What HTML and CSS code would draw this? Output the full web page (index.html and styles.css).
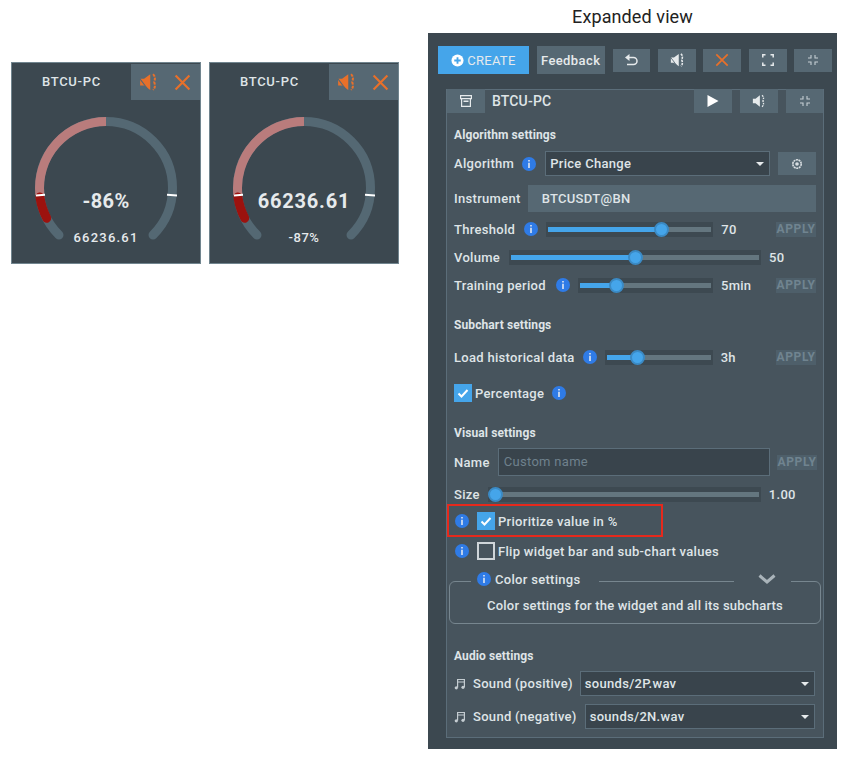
FILE: index.html
```html
<!DOCTYPE html>
<html lang="en">
<head>
    <meta charset="UTF-8">
    <title>Expanded view</title>
    <link rel="stylesheet" href="styles.css">
</head>
<body>
    <svg class="icon-defs" width="0" height="0">
        <symbol id="i-mute" viewBox="0 0 16 16">
            <path fill="currentColor" d="M1 5h3.500L10 1v14l-5.500-4H1z"/>
            <path fill="none" stroke="var(--button)" stroke-width="1" d="M0 4l9 12"/>
            <path fill="none" stroke="currentColor" stroke-width="1.800" stroke-dasharray="2.600 1" d="M12.500 1c2 2 2 4 1 7 1 3 1 5-1 7"/>
        </symbol>
        <symbol id="i-sound" viewBox="0 0 16 16">
            <path fill="currentColor" d="M1 5.500h3L9 1.500v13l-5-4H1z"/>
            <path fill="none" stroke="currentColor" stroke-width="1.500" stroke-dasharray="2 1" d="M11.500 1.500c2 2 2 3 1 6.500 1 3 1 4.500-1 6.500"/>
        </symbol>
        <symbol id="i-close" viewBox="0 0 16 16">
            <path fill="none" stroke="currentColor" stroke-width="2" d="M1.500 1.500l13 13M14.500 1.500l-13 13"/>
        </symbol>
        <symbol id="i-back" viewBox="0 0 14 14">
            <path fill="none" stroke="currentColor" stroke-width="1.500" d="M3 4.500h6.500a3.500 3.500 0 0 1 0 7H3"/>
            <path fill="currentColor" d="M5.500 1v7L1 4.500z"/>
        </symbol>
        <symbol id="i-expand" viewBox="0 0 12 12">
            <path fill="none" stroke="currentColor" stroke-width="1.500" d="M.8 3.500V.8h2.700M8.500.8h2.700v2.700M11.200 8.500v2.700H8.500M3.500 11.200H.8V8.500"/>
        </symbol>
        <symbol id="i-shrink" viewBox="0 0 12 12">
            <path fill="none" stroke="currentColor" stroke-width="1.100" d="M4 1v3H1M8 1v3h3M4 11V8H1M8 11V8h3"/>
        </symbol>
        <symbol id="i-archive" viewBox="0 0 12 12">
            <path fill="none" stroke="currentColor" stroke-width="1.200" d="M.6.6h10.800v3H.6zM1.600 3.600v7.800h8.800V3.600"/>
            <path fill="currentColor" d="M3.500 5.500h5v1.500h-5z"/>
        </symbol>
        <symbol id="i-info" viewBox="0 0 14 14">
            <circle cx="7" cy="7" r="7" fill="#2f7be6"/>
            <path fill="#dfe7f2" d="M6.200 3h1.600v1.500H6.200zM6.200 5.800h1.600V11H6.200z"/>
        </symbol>
        <symbol id="i-note" viewBox="0 0 12 12">
            <path fill="none" stroke="currentColor" stroke-width="1.200" d="M3.600 9.500V1.500h6.800v7.500M3.600 4h6.800"/>
            <circle cx="2.300" cy="9.800" r="1.600" fill="currentColor"/>
            <circle cx="9" cy="9.300" r="1.600" fill="currentColor"/>
        </symbol>
        <symbol id="i-check" viewBox="0 0 18 18">
            <path fill="none" stroke="#fff" stroke-width="2" d="M4.500 9.500l3 3 6-6.500"/>
        </symbol>
        <symbol id="i-gauge" viewBox="0 0 190 164">
            <path class="arc-base" d="M47.980 135.020A66.500 66.500 0 1 1 142.020 135.020"/>
            <path class="arc-light" d="M28.870 95A66.500 66.500 0 0 1 95 21.500"/>
            <path class="arc-dark" d="M28.900 97A66.500 66.500 0 0 0 35.750 118.200"/>
            <path class="arc-tick" d="M25 95.500l9-.8M156 94.700l10 .8"/>
        </symbol>
    </svg>

    <div class="widgets">
        <div class="widget">
            <div class="widget-head">
                <span class="widget-name">BTCU-PC</span>
                <div class="widget-actions">
                    <svg class="ico-orange ico-mute"><use href="#i-mute"/></svg>
                    <svg class="ico-orange ico-x"><use href="#i-close"/></svg>
                </div>
            </div>
            <svg class="gauge" width="190" height="164"><use href="#i-gauge"/></svg>
            <div class="gauge-text">
                <span class="big">-86%</span>
                <span class="small wide">66236.61</span>
            </div>
        </div>
        <div class="widget">
            <div class="widget-head">
                <span class="widget-name">BTCU-PC</span>
                <div class="widget-actions">
                    <svg class="ico-orange ico-mute"><use href="#i-mute"/></svg>
                    <svg class="ico-orange ico-x"><use href="#i-close"/></svg>
                </div>
            </div>
            <svg class="gauge" width="190" height="164"><use href="#i-gauge"/></svg>
            <div class="gauge-text">
                <span class="big wide">66236.61</span>
                <span class="small">-87%</span>
            </div>
        </div>
    </div>

    <div class="expanded">
        <h1 class="expanded-title">Expanded view</h1>
        <div class="panel">
            <div class="toolbar">
                <button class="btn-create"><svg class="plus" viewBox="0 0 14 14"><circle cx="7" cy="7" r="6.500" fill="#fff"/><path d="M7 3.500v7M3.500 7h7" stroke="#45a5ea" stroke-width="2"/></svg>CREATE</button>
                <button class="btn-feedback">Feedback</button>
                <button class="btn-tool"><svg class="ico-14"><use href="#i-back"/></svg></button>
                <button class="btn-tool"><svg class="ico-14"><use href="#i-mute"/></svg></button>
                <button class="btn-tool ico-orange"><svg class="ico-14"><use href="#i-close"/></svg></button>
                <button class="btn-tool"><svg class="ico-12"><use href="#i-expand"/></svg></button>
                <button class="btn-tool"><svg class="ico-shrink"><use href="#i-shrink"/></svg></button>
            </div>

            <div class="inner">
                <div class="inner-head">
                    <button class="btn-head first"><svg class="ico-12"><use href="#i-archive"/></svg></button>
                    <span class="inner-name">BTCU-PC</span>
                    <button class="btn-head"><svg class="ico-play" viewBox="0 0 12 12"><path fill="#fff" d="M.5 0l11 6-11 6z"/></svg></button>
                    <button class="btn-head"><svg class="ico-14"><use href="#i-sound"/></svg></button>
                    <button class="btn-head last"><svg class="ico-shrink"><use href="#i-shrink"/></svg></button>
                </div>

                <div class="inner-body">
                    <h2 class="section">Algorithm settings</h2>
                    <div class="row row-algo">
                        <span class="label">Algorithm</span>
                        <svg class="info info-algo"><use href="#i-info"/></svg>
                        <div class="select select-algo">Price Change<i class="caret"></i></div>
                        <button class="btn-gear"><svg class="ico-12" viewBox="0 0 12 12"><circle cx="6" cy="6" r="4.200" fill="none" stroke="#d8dee2" stroke-width="1.600" stroke-dasharray="2 .6"/><circle cx="6" cy="6" r="1.800" fill="#d8dee2"/></svg></button>
                    </div>
                    <div class="row row-instrument">
                        <span class="label">Instrument</span>
                        <div class="instrument">BTCUSDT@BN</div>
                    </div>
                    <div class="row row-threshold">
                        <span class="label">Threshold</span>
                        <svg class="info info-threshold"><use href="#i-info"/></svg>
                        <div class="slider slider-threshold"><div class="track"><div class="fill" style="width: 69%"><i class="knob"></i></div></div></div>
                        <span class="value">70</span>
                        <span class="apply">APPLY</span>
                    </div>
                    <div class="row row-volume">
                        <span class="label">Volume</span>
                        <div class="slider slider-volume"><div class="track"><div class="fill" style="width: 50%"><i class="knob"></i></div></div></div>
                        <span class="value">50</span>
                    </div>
                    <div class="row row-training">
                        <span class="label">Training period</span>
                        <svg class="info info-training"><use href="#i-info"/></svg>
                        <div class="slider slider-training"><div class="track"><div class="fill" style="width: 27.500%"><i class="knob"></i></div></div></div>
                        <span class="value">5min</span>
                        <span class="apply">APPLY</span>
                    </div>

                    <h2 class="section section-sub">Subchart settings</h2>
                    <div class="row row-load">
                        <span class="label">Load historical data</span>
                        <svg class="info info-load"><use href="#i-info"/></svg>
                        <div class="slider slider-load"><div class="track"><div class="fill" style="width: 29%"><i class="knob"></i></div></div></div>
                        <span class="value">3h</span>
                        <span class="apply">APPLY</span>
                    </div>
                    <div class="row row-percent">
                        <span class="checkbox checked"><svg><use href="#i-check"/></svg></span>
                        <span class="label label-check">Percentage</span>
                        <svg class="info info-percent"><use href="#i-info"/></svg>
                    </div>

                    <h2 class="section section-visual">Visual settings</h2>
                    <div class="row row-name">
                        <span class="label">Name</span>
                        <div class="name-input">Custom name</div>
                        <span class="apply">APPLY</span>
                    </div>
                    <div class="row row-size">
                        <span class="label">Size</span>
                        <div class="slider slider-size"><div class="track"><div class="fill" style="width: 2%"><i class="knob"></i></div></div></div>
                        <span class="value">1.00</span>
                    </div>
                    <div class="row row-prioritize">
                        <svg class="info"><use href="#i-info"/></svg>
                        <span class="checkbox checked"><svg><use href="#i-check"/></svg></span>
                        <span class="label label-check">Prioritize value in %</span>
                    </div>
                    <div class="row row-flip">
                        <svg class="info"><use href="#i-info"/></svg>
                        <span class="checkbox"></span>
                        <span class="label label-check">Flip widget bar and sub-chart values</span>
                    </div>

                    <div class="color-box">
                        <div class="color-legend">
                            <svg class="info"><use href="#i-info"/></svg>
                            <span class="label">Color settings</span>
                        </div>
                        <div class="color-chevron">
                            <svg viewBox="0 0 18 10" width="18" height="10"><path fill="none" stroke="#aab4ba" stroke-width="3" d="M1.500 1.500L9 8l7.500-6.500"/></svg>
                        </div>
                        <p class="color-note">Color settings for the widget and all its subcharts</p>
                    </div>

                    <h2 class="section section-audio">Audio settings</h2>
                    <div class="row row-sound">
                        <svg class="ico-12 note"><use href="#i-note"/></svg>
                        <span class="label">Sound (positive)</span>
                        <div class="select select-positive">sounds/2P.wav<i class="caret"></i></div>
                    </div>
                    <div class="row row-sound row-sound-neg">
                        <svg class="ico-12 note"><use href="#i-note"/></svg>
                        <span class="label">Sound (negative)</span>
                        <div class="select select-negative">sounds/2N.wav<i class="caret"></i></div>
                    </div>
                </div>
            </div>
        </div>
    </div>
</body>
</html>
```

FILE: styles.css
```css
:root {
    --outer: #3c4850;
    --inner: #47545d;
    --line: #5b6d79;
    --button: #566873;
    --field: #39444c;
    --blue: #45a5ea;
    --text: #dfe4e7;
    --orange: #e8702a;
}

body {
    margin: 0;
    width: 852px;
    height: 764px;
    overflow: hidden;
    display: flex;
    background-color: #ffffff;
    font-family: 'Roboto', sans-serif;
    color: var(--text);
}

button {
    border: none;
    padding: 0;
    display: flex;
    align-items: center;
    justify-content: center;
    font-family: 'Roboto', sans-serif;
    color: #e6eaec;
}

.icon-defs {
    position: absolute;
}

/* small widgets */
.widgets {
    display: flex;
    align-items: flex-start;
    gap: 8px;
    padding: 62px 0 0 11px;
}

.widget {
    position: relative;
    width: 190px;
    height: 202px;
    box-sizing: border-box;
    background-color: var(--outer);
    border: 1px solid #71858f;
}

.widget-head {
    display: flex;
    justify-content: space-between;
    height: 36px;
    margin-top: 1px;
}

.widget-name {
    padding: 10px 0 0 30px;
    font-size: 13px;
    font-weight: 500;
    letter-spacing: 0.7px;
}

.widget-actions {
    width: 69px;
    display: flex;
    align-items: center;
    background-color: var(--button);
}

.ico-orange {
    color: var(--orange);
}

.ico-mute {
    width: 18px;
    height: 18px;
    margin-left: 8px;
}

.ico-x {
    width: 17px;
    height: 17px;
    margin-left: 17px;
}

.gauge {
    display: block;
    margin-left: -1px;
}

.arc-base,
.arc-light,
.arc-dark,
.arc-tick {
    fill: none;
}

.arc-base {
    stroke: #546873;
    stroke-width: 9;
    stroke-linecap: round;
}

.arc-light {
    stroke: #b97c7c;
    stroke-width: 9;
}

.arc-dark {
    stroke: #9c120e;
    stroke-width: 9;
    stroke-linecap: round;
}

.arc-tick {
    stroke: #ffffff;
    stroke-width: 2;
}

.gauge-text {
    position: absolute;
    left: 0;
    right: 0;
    top: 125px;
    display: flex;
    flex-direction: column;
    align-items: center;
    color: #e6eaec;
}

.big {
    height: 26px;
    line-height: 26px;
    font-size: 20px;
    font-weight: 700;
    letter-spacing: 0.4px;
}

.big.wide {
    letter-spacing: 0.8px;
}

.small {
    margin-top: 16px;
    line-height: 16px;
    font-size: 13px;
    font-weight: 500;
    letter-spacing: 0.5px;
}

.small.wide {
    letter-spacing: 1.2px;
}

/* expanded panel */
.expanded {
    margin-left: 29px;
    width: 409px;
}

.expanded-title {
    margin: 0;
    height: 33px;
    line-height: 34px;
    text-align: center;
    font-size: 18px;
    font-weight: 400;
    letter-spacing: 0.1px;
    color: #222222;
}

.panel {
    height: 716px;
    box-sizing: border-box;
    padding: 13px 5px 0 10px;
    background-color: var(--outer);
}

.toolbar {
    display: flex;
    align-items: center;
    height: 28px;
}

.btn-create {
    width: 91px;
    height: 28px;
    background-color: var(--blue);
    font-size: 13px;
    font-weight: 400;
    letter-spacing: 0.3px;
}

.plus {
    width: 13px;
    height: 13px;
    margin-right: 3px;
}

.btn-feedback {
    width: 68px;
    height: 28px;
    margin-left: 8px;
    background-color: var(--button);
    font-size: 13px;
    font-weight: 500;
    letter-spacing: 0.4px;
}

.btn-tool {
    width: 38px;
    height: 23px;
    margin-left: 8px;
    background-color: var(--button);
}

.btn-tool + .btn-tool {
    margin-left: 7.500px;
}

.ico-14 {
    width: 14px;
    height: 14px;
}

.ico-12 {
    width: 12px;
    height: 12px;
}

.ico-shrink {
    width: 12px;
    height: 12px;
    color: #c5ced3;
}

.ico-play {
    width: 12px;
    height: 12px;
}

.inner {
    width: 378px;
    height: 649px;
    box-sizing: border-box;
    margin: 15px 0 0 8px;
    background-color: var(--inner);
    border: 1px solid var(--line);
}

.inner-head {
    display: flex;
    align-items: center;
    height: 24px;
    margin-top: -1px;
}

.btn-head {
    width: 38px;
    height: 24px;
    margin-left: 8px;
    background-color: var(--button);
}

.btn-head.first {
    margin-left: 0;
}

.btn-head.last {
    width: 37px;
}

.inner-name {
    width: 202px;
    padding-left: 7px;
    box-sizing: border-box;
    font-size: 14px;
    font-weight: 500;
    letter-spacing: 0.2px;
}

.inner-body {
    padding: 14px 0 0 7px;
}

.section {
    margin: 0;
    height: 16px;
    line-height: 16px;
    font-size: 12px;
    font-weight: 700;
    letter-spacing: 0.1px;
}

.section-sub {
    margin-top: 24px;
}

.section-visual {
    margin-top: 23px;
}

.section-audio {
    margin-top: 24px;
}

.row {
    display: flex;
    align-items: center;
}

.label {
    font-size: 13px;
    font-weight: 500;
    letter-spacing: 0.3px;
    white-space: nowrap;
}

.info {
    flex: none;
    width: 14px;
    height: 14px;
}

.row-algo {
    height: 25px;
    margin-top: 8px;
}

.info-algo {
    margin-left: 8px;
}

.select {
    position: relative;
    height: 25px;
    line-height: 23px;
    box-sizing: border-box;
    background-color: var(--field);
    border: 1px solid var(--line);
    padding-left: 4px;
    font-size: 13px;
    font-weight: 500;
    letter-spacing: 0.3px;
}

.caret {
    position: absolute;
    right: 5px;
    top: 10px;
    border-left: 4px solid transparent;
    border-right: 4px solid transparent;
    border-top: 4px solid #e6eaec;
}

.select-algo {
    width: 225px;
    margin-left: 9px;
}

.btn-gear {
    width: 38px;
    height: 23px;
    margin-left: 8px;
    background-color: var(--button);
}

.row-instrument {
    height: 27px;
    margin-top: 9px;
}

.instrument {
    width: 288px;
    height: 27px;
    line-height: 27px;
    box-sizing: border-box;
    margin-left: 7px;
    padding-left: 14px;
    background-color: var(--button);
    font-size: 13px;
    font-weight: 500;
    letter-spacing: 0.3px;
}

.slider {
    height: 15px;
    display: flex;
    align-items: center;
    padding: 0 2px;
    box-sizing: border-box;
    background-color: #3d4951;
}

.track {
    flex: 1;
    height: 5px;
    background-color: #64767f;
}

.fill {
    position: relative;
    height: 5px;
    background-color: var(--blue);
}

.knob {
    position: absolute;
    right: -8px;
    top: -5px;
    width: 11px;
    height: 11px;
    border-radius: 50%;
    background-color: var(--blue);
    border: 2px solid #3b8ac4;
}

.value {
    margin-left: 8px;
    font-size: 13px;
    font-weight: 500;
    letter-spacing: 0.3px;
    color: var(--text);
}

.apply {
    margin-left: auto;
    width: 40px;
    height: 15px;
    line-height: 15px;
    text-align: center;
    background-color: #4e5f6a;
    color: #708490;
    font-size: 12px;
    font-weight: 700;
    letter-spacing: 0.6px;
}

.row-threshold {
    width: 362px;
    height: 16px;
    margin-top: 9px;
}

.info-threshold {
    margin-left: 9px;
}

.slider-threshold {
    width: 167px;
    margin-left: 8px;
}

.row-volume {
    height: 16px;
    margin-top: 12px;
}

.slider-volume {
    width: 252px;
    margin-left: 9px;
}

.row-training {
    width: 362px;
    height: 16px;
    margin-top: 12px;
}

.info-training {
    margin-left: 10px;
}

.slider-training {
    width: 135px;
    margin-left: 8px;
}

.row-load {
    width: 362px;
    height: 16px;
    margin-top: 16px;
}

.info-load {
    margin-left: 8px;
}

.slider-load {
    width: 108px;
    margin-left: 8px;
}

.row-percent {
    height: 18px;
    margin-top: 19px;
}

.checkbox {
    flex: none;
    display: block;
    width: 18px;
    height: 18px;
    box-sizing: border-box;
    border: 2px solid #cfd5d9;
}

.checkbox svg {
    display: block;
    width: 18px;
    height: 18px;
}

.checkbox.checked {
    border: none;
    background-color: var(--blue);
}

.label-check {
    margin-left: 3px;
}

.info-percent {
    margin-left: 8px;
}

.row-name {
    width: 363px;
    height: 28px;
    margin-top: 7px;
}

.name-input {
    width: 272px;
    height: 28px;
    line-height: 26px;
    box-sizing: border-box;
    margin-left: 8px;
    padding-left: 5px;
    background-color: var(--field);
    border: 1px solid var(--line);
    color: #6f818c;
    font-size: 13px;
    letter-spacing: 0.3px;
}

.row-size {
    height: 16px;
    margin-top: 10px;
}

.slider-size {
    width: 273px;
    margin-left: 8px;
}

.row-prioritize {
    width: 216px;
    height: 33px;
    box-sizing: border-box;
    margin: 2px 0 0 -7px;
    padding: 1px 0 0 6px;
    border: 2px solid #e6291c;
}

.row-prioritize .checkbox {
    margin-left: 8px;
}

.row-flip {
    height: 18px;
    margin-top: 5px;
    margin-left: 1px;
}

.row-flip .checkbox {
    margin-left: 8px;
}

.color-box {
    position: relative;
    width: 372px;
    height: 43px;
    box-sizing: border-box;
    margin: 21px 0 0 -5px;
    border: 1px solid #77868f;
    border-radius: 6px;
}

.color-legend {
    position: absolute;
    left: 21px;
    top: -13px;
    display: flex;
    align-items: center;
    height: 20px;
    padding: 0 18px 0 6px;
    background-color: var(--inner);
}

.color-legend .label {
    margin-left: 4px;
}

.color-chevron {
    position: absolute;
    left: 284px;
    top: -13px;
    width: 57px;
    height: 20px;
    box-sizing: border-box;
    padding-left: 8px;
    display: flex;
    align-items: center;
    justify-content: center;
    background-color: var(--inner);
}

.color-note {
    margin: 0;
    padding-top: 16px;
    text-align: center;
    font-size: 13px;
    font-weight: 500;
    letter-spacing: 0.2px;
}

.row-sound {
    height: 25px;
    margin-top: 7px;
}

.row-sound-neg {
    margin-top: 8px;
}

.note {
    color: #c4ccd1;
    margin-right: 7px;
}

.select-positive {
    width: 235px;
    margin-left: 7px;
}

.select-negative {
    width: 230px;
    margin-left: 8px;
}
```
